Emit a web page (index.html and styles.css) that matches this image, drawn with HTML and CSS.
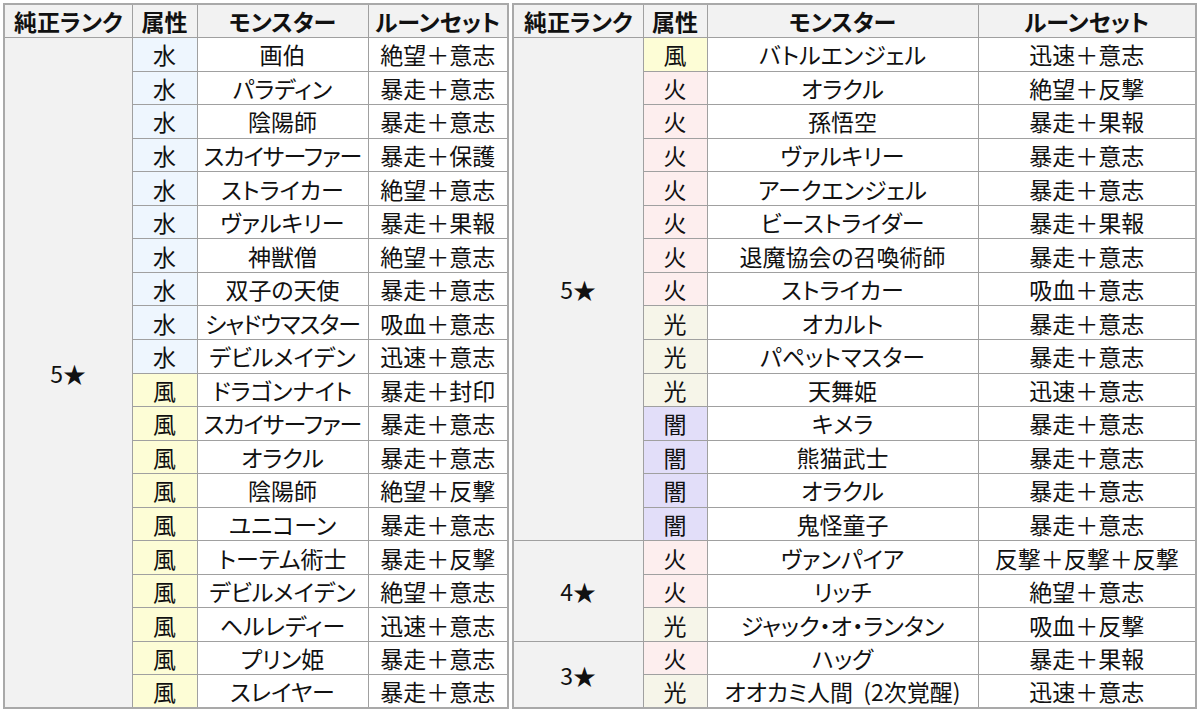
FILE: index.html
```html
<!DOCTYPE html>
<html lang="ja">
<head>
<meta charset="utf-8">
<title>純正ランク表</title>
<link rel="stylesheet" href="styles.css">
</head>
<body>
<div class="wrap">
  <table class="rt left">
    <colgroup><col class="c-rank1"><col class="c-attr1"><col class="c-mon1"><col class="c-rune1"></colgroup>
    <thead>
      <tr><th>純正ランク</th><th>属性</th><th>モンスター</th><th>ルーンセット</th></tr>
    </thead>
    <tbody>
      <tr><td class="rank" rowspan="20">5★</td><td class="attr water">水</td><td>画伯</td><td>絶望＋意志</td></tr>
      <tr><td class="attr water">水</td><td>パラディン</td><td>暴走＋意志</td></tr>
      <tr><td class="attr water">水</td><td>陰陽師</td><td>暴走＋意志</td></tr>
      <tr><td class="attr water">水</td><td class="kana">スカイサーファー</td><td>暴走＋保護</td></tr>
      <tr><td class="attr water">水</td><td>ストライカー</td><td>絶望＋意志</td></tr>
      <tr><td class="attr water">水</td><td>ヴァルキリー</td><td>暴走＋果報</td></tr>
      <tr><td class="attr water">水</td><td>神獣僧</td><td>絶望＋意志</td></tr>
      <tr><td class="attr water">水</td><td>双子の天使</td><td>暴走＋意志</td></tr>
      <tr><td class="attr water">水</td><td class="kana">シャドウマスター</td><td>吸血＋意志</td></tr>
      <tr><td class="attr water">水</td><td>デビルメイデン</td><td>迅速＋意志</td></tr>
      <tr><td class="attr wind">風</td><td>ドラゴンナイト</td><td>暴走＋封印</td></tr>
      <tr><td class="attr wind">風</td><td class="kana">スカイサーファー</td><td>暴走＋意志</td></tr>
      <tr><td class="attr wind">風</td><td>オラクル</td><td>暴走＋意志</td></tr>
      <tr><td class="attr wind">風</td><td>陰陽師</td><td>絶望＋反撃</td></tr>
      <tr><td class="attr wind">風</td><td>ユニコーン</td><td>暴走＋意志</td></tr>
      <tr><td class="attr wind">風</td><td>トーテム術士</td><td>暴走＋反撃</td></tr>
      <tr><td class="attr wind">風</td><td>デビルメイデン</td><td>絶望＋意志</td></tr>
      <tr><td class="attr wind">風</td><td>ヘルレディー</td><td>迅速＋意志</td></tr>
      <tr><td class="attr wind">風</td><td>プリン姫</td><td>暴走＋意志</td></tr>
      <tr><td class="attr wind">風</td><td>スレイヤー</td><td>暴走＋意志</td></tr>
    </tbody>
  </table>
  <table class="rt right">
    <colgroup><col class="c-rank2"><col class="c-attr2"><col class="c-mon2"><col class="c-rune2"></colgroup>
    <thead>
      <tr><th>純正ランク</th><th>属性</th><th>モンスター</th><th>ルーンセット</th></tr>
    </thead>
    <tbody>
      <tr><td class="rank" rowspan="15">5★</td><td class="attr wind">風</td><td>バトルエンジェル</td><td>迅速＋意志</td></tr>
      <tr><td class="attr fire">火</td><td>オラクル</td><td>絶望＋反撃</td></tr>
      <tr><td class="attr fire">火</td><td>孫悟空</td><td>暴走＋果報</td></tr>
      <tr><td class="attr fire">火</td><td>ヴァルキリー</td><td>暴走＋意志</td></tr>
      <tr><td class="attr fire">火</td><td>アークエンジェル</td><td>暴走＋意志</td></tr>
      <tr><td class="attr fire">火</td><td>ビーストライダー</td><td>暴走＋果報</td></tr>
      <tr><td class="attr fire">火</td><td>退魔協会の召喚術師</td><td>暴走＋意志</td></tr>
      <tr><td class="attr fire">火</td><td>ストライカー</td><td>吸血＋意志</td></tr>
      <tr><td class="attr light">光</td><td>オカルト</td><td>暴走＋意志</td></tr>
      <tr><td class="attr light">光</td><td>パペットマスター</td><td>暴走＋意志</td></tr>
      <tr><td class="attr light">光</td><td>天舞姫</td><td>迅速＋意志</td></tr>
      <tr><td class="attr dark">闇</td><td>キメラ</td><td>暴走＋意志</td></tr>
      <tr><td class="attr dark">闇</td><td>熊猫武士</td><td>暴走＋意志</td></tr>
      <tr><td class="attr dark">闇</td><td>オラクル</td><td>暴走＋意志</td></tr>
      <tr><td class="attr dark">闇</td><td>鬼怪童子</td><td>暴走＋意志</td></tr>
      <tr><td class="rank" rowspan="3">4★</td><td class="attr fire">火</td><td>ヴァンパイア</td><td>反撃＋反撃＋反撃</td></tr>
      <tr><td class="attr fire">火</td><td>リッチ</td><td>絶望＋意志</td></tr>
      <tr><td class="attr light">光</td><td>ジャック・オ・ランタン</td><td>吸血＋反撃</td></tr>
      <tr><td class="rank" rowspan="2">3★</td><td class="attr fire">火</td><td>ハッグ</td><td>暴走＋果報</td></tr>
      <tr><td class="attr light">光</td><td>オオカミ人間&nbsp;&nbsp;(2次覚醒)</td><td>迅速＋意志</td></tr>
    </tbody>
  </table>
</div>
</body>
</html>
```

FILE: styles.css
```css
html, body {
  margin: 0;
  padding: 0;
  background: #ffffff;
}

body {
  font-family: "Noto Sans CJK JP", "Noto Sans", sans-serif;
  color: #111111;
  font-feature-settings: "palt";
}

.wrap {
  display: flex;
  align-items: flex-start;
  gap: 3px;
  padding: 3px 0 0 3px;
}

.rt {
  border-collapse: collapse;
  table-layout: fixed;
  border: 2px solid #a9a9a9;
}

.rt.left { width: 504px; }
.rt.right { width: 683px; }

.c-rank1 { width: 128px; }
.c-attr1 { width: 65px; }
.c-mon1 { width: 171px; }
.c-rune1 { width: 140px; }

.c-rank2 { width: 130px; }
.c-attr2 { width: 64px; }
.c-mon2 { width: 271px; }
.c-rune2 { width: 218px; }

.rt tr {
  height: 33.55px;
}

.rt th,
.rt td {
  border: 1px solid #a0a0a0;
  height: auto;
  padding: 0;
  text-align: center;
  vertical-align: middle;
  font-size: 23px;
  line-height: 24px;
  white-space: nowrap;
  overflow: hidden;
}

.rt th {
  background: #f2f2f2;
  font-weight: 700;
  font-size: 23px;
}

.rt td.kana {
  letter-spacing: -1px;
}

.rt td.rank {
  background: #f2f2f2;
  font-size: 23px;
}

.attr.water { background: #eef6fe; }
.attr.wind { background: #fdfdd6; }
.attr.fire { background: #fdeeee; }
.attr.light { background: #f6f5e9; }
.attr.dark { background: #e2def9; }
```
